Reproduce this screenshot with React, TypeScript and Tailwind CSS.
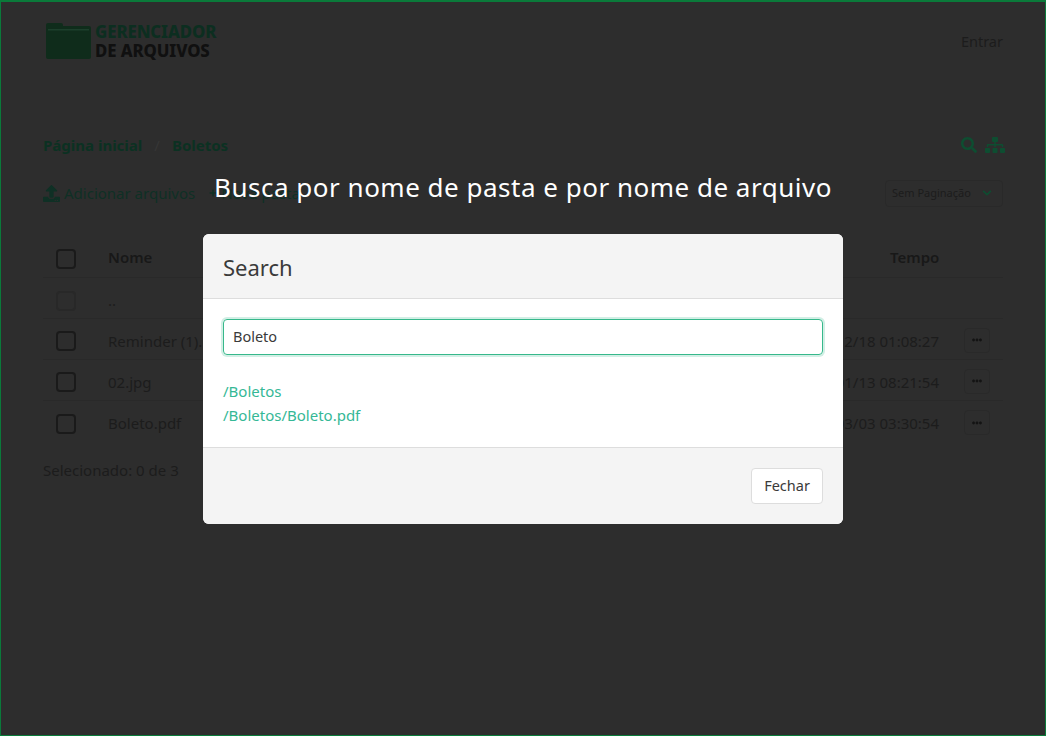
import { FaEllipsisH, FaPlus, FaSearch, FaSitemap, FaUpload, FaChevronDown } from "react-icons/fa";

const rows = [
  { name: "Reminder (1).pdf", time: "2020/12/18 01:08:27" },
  { name: "02.jpg", time: "2021/01/13 08:21:54" },
  { name: "Boleto.pdf", time: "2021/03/03 03:30:54" },
];

function Check({ faded }: { faded?: boolean }) {
  return (
    <span className={`block w-5 h-5 rounded-[4px] border-2 ${faded ? "border-[#282828]" : "border-[#1a1a1a]"}`} />
  );
}

function Logo() {
  return (
    <div className="flex items-center gap-[4px]">
      <svg width="45" height="36" viewBox="0 0 45 36" className="text-[#0f2c1b]">
        <path
          fill="currentColor"
          d="M0 2a2 2 0 0 1 2-2h13a2 2 0 0 1 2 2v1h26a2 2 0 0 1 2 2v29a2 2 0 0 1-2 2H2a2 2 0 0 1-2-2z"
        />
        <rect x="2" y="6" width="41" height="1.5" fill="#1d3f2c" />
      </svg>
      <div className="font-extrabold text-[16.8px] leading-[19px] -mt-[1px] -tracking-[0.1px]">
        <div className="text-[#0c2e20]">GERENCIADOR</div>
        <div className="text-[#101010]">DE ARQUIVOS</div>
      </div>
    </div>
  );
}

export default function App() {
  return (
    <div
      className="relative w-[1046px] h-[736px] overflow-hidden bg-[#2d2d2d] text-[#1c1c1c] text-[15px]"
      style={{ fontFamily: '"Noto Sans", "Open Sans", sans-serif' }}
    >
      {/* pagina escurecida atras do modal */}
      <div className="px-[43px]">
        <div className="h-[82px] flex items-center justify-between pl-[3px]">
          <Logo />
          <span className="text-[14.5px] text-[#1c1c1c] pt-[1px]">Entrar</span>
        </div>

        <div className="mt-[49px] h-[28px] flex items-center justify-between font-bold text-[#0b3122]">
          <div className="flex items-center gap-[12px]">
            <span>Página inicial</span>
            <span className="font-normal text-[#363636]">/</span>
            <span>Boletos</span>
          </div>
          <div className="flex items-center gap-[8px] -mr-[2px] text-[#0e4d31]">
            <FaSearch size={16} />
            <FaSitemap size={20} />
          </div>
        </div>

        <div className="mt-[19px] h-[30px] flex items-center justify-between text-[#0f3025]">
          <div className="flex items-center gap-[14px]">
            <span className="flex items-center gap-[4px]">
              <FaUpload size={17} />
              Adicionar arquivos
            </span>
            <span className="flex items-center gap-[4px]">
              <FaPlus size={8} />
              Nova pasta
            </span>
          </div>
          <div className="w-[118px] h-[27px] flex items-center justify-between pl-[6px] pr-[10px] border border-[#292929] rounded-[4px] text-[11px] text-[#1c1c1c]">
            Sem Paginação
            <FaChevronDown size={10} className="text-[#0e4d31]" />
          </div>
        </div>

        <div className="mt-[30px]">
          <div className="h-[40px] flex items-center border-b border-[#292929] font-semibold text-[#181818]">
            <div className="w-[65px] pl-[13px] pt-[2px]">
              <Check />
            </div>
            <div className="flex-1">Nome</div>
            <div className="w-[113px]">Tempo</div>
          </div>
          <div className="h-[41px] pt-[5px] flex items-center border-b border-[#292929]">
            <div className="w-[65px] pl-[13px]">
              <Check faded />
            </div>
            <div className="flex-1">..</div>
          </div>
          {rows.map((r) => (
            <div
              key={r.name}
              className="h-[41px] pt-[4px] flex items-center border-b border-[#292929] last:border-b-0"
            >
              <div className="w-[65px] pl-[13px]">
                <Check />
              </div>
              <div className="flex-1">{r.name}</div>
              <div className="w-[63px] whitespace-nowrap flex justify-end">{r.time}</div>
              <div className="w-[64px] pl-[25px]">
                <span className="w-[26px] h-[25px] -mt-[2px] flex items-center justify-center border border-[#292929] rounded-[4px] text-[#131313]">
                  <FaEllipsisH size={10} />
                </span>
              </div>
            </div>
          ))}
        </div>

        <div className="mt-[17px]">Selecionado: 0 de 3</div>
      </div>

      {/* borda verde da janela */}
      <div className="absolute inset-0 border border-[#0a7a3a] border-t-[2px]" />

      <div className="absolute inset-x-0 top-[169px] text-center text-white text-[26px] leading-[36px] tracking-[0.5px]">
        Busca por nome de pasta e por nome de arquivo
      </div>

      {/* modal */}
      <div className="absolute left-[203px] top-[234px] w-[640px] h-[290px] rounded-[6px] overflow-hidden bg-white flex flex-col">
        <div className="h-[65px] shrink-0 flex items-center px-5 pt-[3px] bg-[#f4f4f4] border-b border-[#ddd] text-[22px] text-[#3a3a3a]">
          Search
        </div>
        <div className="flex-1 px-5 pt-5">
          <div className="h-9 flex items-center px-[9px] rounded-[4px] border border-[#37b88b] shadow-[0_0_0_2px_#d2efe5] text-[14.5px] text-[#3a3a3a]">
            Boleto
          </div>
          <div className="mt-6 text-[15px] leading-6 text-[#35b896]">
            <div>/Boletos</div>
            <div>/Boletos/Boleto.pdf</div>
          </div>
        </div>
        <div className="h-[77px] shrink-0 flex items-center justify-end px-5 bg-[#f4f4f4] border-t border-[#ddd]">
          <span className="w-[72px] h-9 flex items-center justify-center bg-white border border-[#ddd] rounded-[4px] text-[14.5px] text-[#3a3a3a]">
            Fechar
          </span>
        </div>
      </div>
    </div>
  );
}
